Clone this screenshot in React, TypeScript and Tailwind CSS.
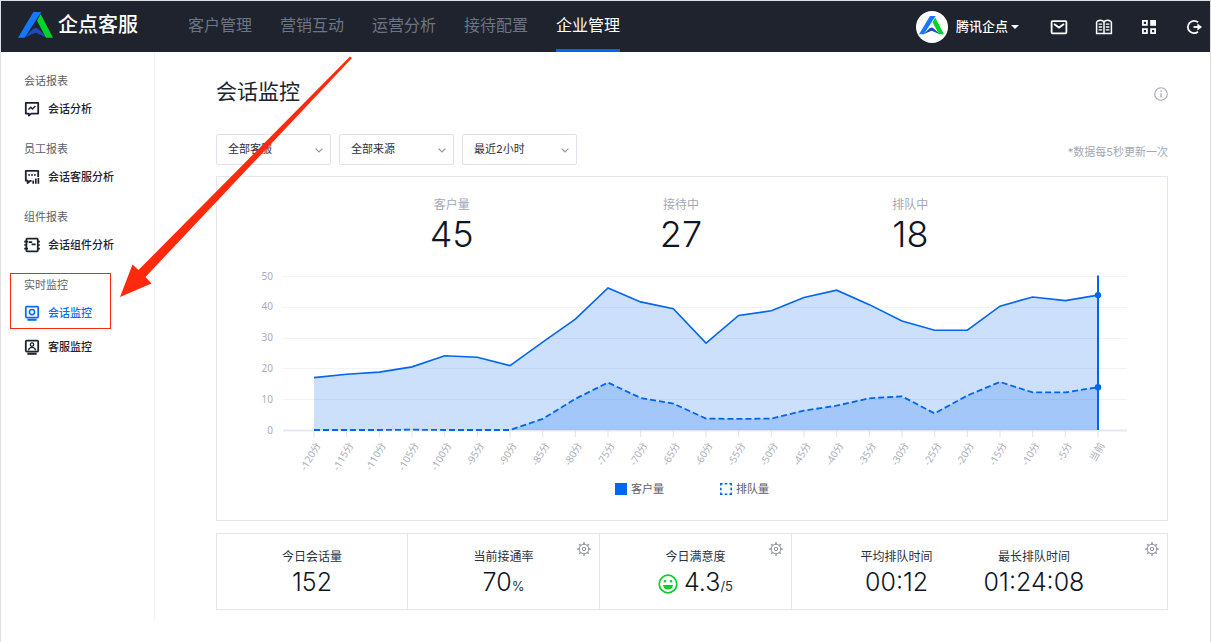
import type { ReactNode } from "react";

const CUSTOMERS = [17, 18.1, 18.8, 20.5, 24.1, 23.6, 20.9, 28.5, 36, 46.1, 41.6, 39.4, 28.2, 37.2, 38.7, 43, 45.4, 40.7, 35.4, 32.4, 32.4, 40.2, 43.2, 42, 43.8];
const QUEUED = [0, 0, 0, 0.1, 0, 0, 0, 3.6, 10.1, 15.4, 10.4, 8.6, 3.7, 3.6, 3.7, 6.3, 7.9, 10.3, 10.9, 5.4, 11.2, 15.6, 12.2, 12.2, 13.9];

const BASE = 175;
const px = (i: number) => 97 + (i * 784) / 24;
const py = (v: number) => BASE - v * 3.08;
const line = (data: number[]) => data.map((v, i) => `${px(i)},${py(v)}`).join(" ");
const area = (data: number[]) => `${px(0)},${BASE} ${line(data)} ${px(24)},${BASE}`;

function Logo({ className }: { className: string }) {
  return (
    <svg viewBox="0 0 105 77" className={className} aria-hidden="true">
      <path d="M46 0H70L20 77H0Z" fill="#1677ff" />
      <path d="M18 77L45 51Q53 45 61 51L88 77L53 62Z" fill="#1d49b8" />
      <path d="M68 6L105 77H84L57 26Z" fill="#00d42b" />
    </svg>
  );
}

function IconButton({ label, children }: { label: string; children: ReactNode }) {
  return (
    <button type="button" aria-label={label} className="flex size-[18px] items-center justify-center text-white">
      <svg viewBox="0 0 18 18" className="size-[18px]" fill="none" stroke="currentColor" strokeWidth="1.8">
        {children}
      </svg>
    </button>
  );
}

function Gear() {
  const teeth = [0, 45, 90, 135, 180, 225, 270, 315];
  return (
    <button type="button" aria-label="设置" className="absolute top-2 right-2 text-[#8d92a0]">
      <svg viewBox="0 0 14 14" className="size-[14px]" fill="none" stroke="currentColor" strokeWidth="1">
        <circle cx="7" cy="7" r="4.8" />
        <circle cx="7" cy="7" r="1.7" />
        {teeth.map((a) => (
          <path key={a} d="M7 2.2V0.3" strokeWidth="1.5" transform={`rotate(${a} 7 7)`} />
        ))}
      </svg>
    </button>
  );
}

function NavItem({ active, children }: { active?: boolean; children: ReactNode }) {
  return (
    <a
      href="#"
      aria-current={active ? "page" : undefined}
      className={
        active
          ? "flex h-full items-center border-b-[3px] border-[#0066f5] text-[16px] whitespace-nowrap text-white"
          : "flex h-full items-center border-b-[3px] border-transparent text-[16px] whitespace-nowrap text-[#6d7484]"
      }
    >
      {children}
    </a>
  );
}

function SideHeading({ children }: { children: ReactNode }) {
  return <h2 className="flex h-[22px] items-center text-[11px] text-[#5c6068]">{children}</h2>;
}

function SideItem({ icon, active, children }: { icon: ReactNode; active?: boolean; children: ReactNode }) {
  return (
    <a
      href="#"
      className={
        active
          ? "flex h-[34px] items-center gap-2 text-[11px] font-medium text-[#0a6cf5]"
          : "flex h-[34px] items-center gap-2 text-[11px] font-medium text-[#1d2331]"
      }
    >
      <svg viewBox="0 0 16 16" className="size-4" fill="none" stroke="currentColor" strokeWidth="1.8">
        {icon}
      </svg>
      {children}
    </a>
  );
}

function Filter({ label, options }: { label: string; options: string[] }) {
  return (
    <div className="relative w-[115px]">
      <select
        aria-label={label}
        className="h-[31px] w-full appearance-none rounded-[2px] border border-[#dfe2ec] bg-white pl-[11px] text-[11px] text-[#2b303c]"
      >
        {options.map((o) => (
          <option key={o}>{o}</option>
        ))}
      </select>
      <svg viewBox="0 0 8 5" className="pointer-events-none absolute top-[14px] right-2 w-2" fill="none" stroke="#8f95a3" strokeWidth="1.2">
        <path d="M0.6 0.6L4 4L7.4 0.6" />
      </svg>
    </div>
  );
}

function Headline({ label, value }: { label: string; value: string }) {
  return (
    <div className="flex flex-col items-center">
      <span className="text-[12px] leading-4 text-[#a3a8b3]">{label}</span>
      <span className="text-[36px] leading-[42px] font-light text-[#0f1524]">{value}</span>
    </div>
  );
}

function Stat({ label, children }: { label: string; children: ReactNode }) {
  return (
    <div className="flex flex-col items-center">
      <span className="text-[12px] leading-4 whitespace-nowrap text-[#2b303c]">{label}</span>
      <span className="flex items-baseline text-[25px] leading-[34px] font-light text-[#0f1524]">{children}</span>
    </div>
  );
}

function TrendChart() {
  const label = (i: number) => (i === 24 ? "当前" : `-${120 - i * 5}分`);
  return (
    <svg viewBox="0 0 950 222" className="block h-auto w-full" role="img" aria-label="客户量与排队量趋势">
      <g className="font-['Noto_Sans','Noto_Sans_CJK_SC',sans-serif]" fontSize="10" fill="#a9aeb8">
        {[50, 40, 30, 20, 10, 0].map((v) => (
          <g key={v}>
            <text x="56" y={py(v) + 3.5} textAnchor="end">
              {v}
            </text>
            <path d={`M66 ${Math.round(py(v)) + 0.5}H910`} stroke={v === 0 ? "#e6e9f3" : "#f2f3f5"} strokeWidth={v === 0 ? 2 : 1} />
          </g>
        ))}
        {CUSTOMERS.map((_, i) => (
          <g key={i}>
            <path d={`M${px(i)} ${BASE}v7`} stroke="#dfe3f0" />
            <text textAnchor="end" transform={`translate(${px(i) + 7} 190) rotate(-60)`}>
              {label(i)}
            </text>
          </g>
        ))}
      </g>
      <polygon points={area(CUSTOMERS)} fill="#0066f0" fillOpacity="0.2" />
      <polygon points={area(QUEUED)} fill="#0066f0" fillOpacity="0.2" />
      <polyline points={line(CUSTOMERS)} fill="none" stroke="#0066f0" strokeWidth="1.6" />
      <polyline points={line(QUEUED)} fill="none" stroke="#0066f0" strokeWidth="1.8" strokeDasharray="6 3" />
      <path d={`M${px(24)} 20.5V${BASE}`} stroke="#0066f0" strokeWidth="2" />
      <circle cx={px(24)} cy={py(43.8)} r="3.2" fill="#0066f0" />
      <circle cx={px(24)} cy={py(13.9)} r="3.2" fill="#0066f0" />
    </svg>
  );
}

export default function App() {
  return (
    <div className="relative min-h-screen border border-[#dcdedf] bg-white font-['Inter','Noto_Sans_CJK_SC',sans-serif]">
      <header className="flex h-[51px] items-stretch bg-[#1e232e] pr-[7px]">
        <a href="#" className="flex w-[187px] shrink-0 items-center gap-[5px] pb-[3px] pl-[17px] text-[20px] font-medium text-white">
          <Logo className="w-[35px]" />
          <span className="whitespace-nowrap">企点客服</span>
        </a>
        <nav className="flex gap-7">
          <NavItem>客户管理</NavItem>
          <NavItem>营销互动</NavItem>
          <NavItem>运营分析</NavItem>
          <NavItem>接待配置</NavItem>
          <NavItem active>企业管理</NavItem>
        </nav>
        <div className="ml-auto flex items-center gap-[27px]">
          <button type="button" className="mr-1 flex items-center gap-2 text-[13px] font-medium whitespace-nowrap text-white">
            <span className="flex size-8 items-center justify-center rounded-full bg-white pb-[2px]">
              <Logo className="w-[25px]" />
            </span>
            <span className="flex items-center gap-[3px]">
              腾讯企点
              <svg viewBox="0 0 8 4" className="w-2" fill="currentColor">
                <path d="M0 0H8L4 4Z" />
              </svg>
            </span>
          </button>
          <IconButton label="消息">
            <rect x="1.6" y="3.1" width="14.8" height="12.2" rx="1" />
            <path d="M4 6L9 9.6L14 6" />
          </IconButton>
          <IconButton label="文档">
            <path d="M9 4.2Q8 2.2 5.4 2.2T1.6 4.2V15.4H16.4V4.2Q15.2 2.2 12.6 2.2T9 4.2V15.4" strokeWidth="1.5" />
            <path d="M3.6 6.2H7.2M3.6 9H7.2M3.6 11.8H7.2M10.8 6.2H14.4M10.8 9H14.4M10.8 11.8H14.4" strokeWidth="1.3" />
          </IconButton>
          <IconButton label="应用">
            <path d="M2.9 2.9H6.9V6.9H2.9ZM2.9 11.1H6.9V15.1H2.9ZM11.1 11.1H15.1V15.1H11.1Z" />
            <path d="M10.2 2H16V7.8H10.2Z" fill="currentColor" stroke="none" />
          </IconButton>
          <IconButton label="退出">
            <path d="M13 4.2A6.2 6.2 0 1 0 13 13.8" />
            <path d="M8.5 9H14" />
            <path d="M12.4 5.4L17 9L12.4 12.6Z" fill="currentColor" stroke="none" />
          </IconButton>
        </div>
      </header>

      <div className="flex">
        <aside className="mb-[22px] w-[154px] shrink-0 border-r border-[#eef0f4] pt-[18px] pl-[23px]">
          <section className="mb-3">
            <SideHeading>会话报表</SideHeading>
            <SideItem
              icon={
                <>
                  <path d="M1.8 1.8H14.2V12.6H7.2L4.8 14.6V12.6H1.8Z" strokeLinejoin="round" />
                  <path d="M4.4 8.6L6.8 6.2L8.4 8L11.4 5" strokeWidth="1.4" />
                </>
              }
            >
              会话分析
            </SideItem>
          </section>
          <section className="mb-3">
            <SideHeading>员工报表</SideHeading>
            <SideItem
              icon={
                <>
                  <path d="M14.2 8V1.8H1.8V11.6H3.6V14L6.4 11.8H7.6" strokeLinejoin="round" />
                  <path d="M4.2 6H6M7.1 6H8.9M10 6H11.8" strokeWidth="1.6" />
                  <path d="M9.2 14.8V11.6M11.8 14.8V9.6M14.4 14.8V9" strokeWidth="1.7" />
                </>
              }
            >
              会话客服分析
            </SideItem>
          </section>
          <section className="mb-3">
            <SideHeading>组件报表</SideHeading>
            <SideItem
              icon={
                <>
                  <rect x="2.4" y="1.6" width="11.4" height="12.8" rx="0.8" />
                  <path d="M0.2 4.6H4M0.2 8H3M0.2 11.6H4M14 4.6H15.9M14 8H15.9M14 11.6H15.9" strokeWidth="1.6" />
                  <path d="M4.6 5.2H8.2M7.6 7.4H11.6" strokeWidth="1.7" />
                </>
              }
            >
              会话组件分析
            </SideItem>
          </section>
          <section className="relative">
            <SideHeading>实时监控</SideHeading>
            <SideItem
              active
              icon={
                <>
                  <rect x="1.8" y="1.6" width="12.4" height="11" rx="1" />
                  <circle cx="8" cy="7.1" r="2.6" strokeWidth="1.6" />
                  <path d="M3.4 14.8H12.6" strokeWidth="2" />
                </>
              }
            >
              会话监控
            </SideItem>
            <SideItem
              icon={
                <>
                  <rect x="1.8" y="1.6" width="12.4" height="11" rx="1" />
                  <circle cx="8" cy="5.6" r="1.7" strokeWidth="1.3" />
                  <path d="M4.4 11.4Q5 8.4 8 8.4T11.6 11.4" strokeWidth="1.4" />
                  <path d="M3.4 14.8H12.6" strokeWidth="2" />
                </>
              }
            >
              客服监控
            </SideItem>
            <div className="pointer-events-none absolute -top-px -left-[14px] h-[56px] w-[101px] border border-[#ff2a0c]" />
          </section>
        </aside>

        <main className="min-w-0 flex-1 pt-6 pr-[42px] pb-8 pl-[61px]">
          <div className="flex items-center justify-between">
            <h1 className="text-[21px] leading-8 text-[#1d2331]">会话监控</h1>
            <button type="button" aria-label="说明" className="pt-1 text-[#a3a8b3]">
              <svg viewBox="0 0 14 14" className="size-[14px]" fill="none" stroke="currentColor" strokeWidth="1.1">
                <circle cx="7" cy="7" r="6.3" />
                <path d="M7 6.2V10.4M7 3.6V5" strokeWidth="1.3" />
              </svg>
            </button>
          </div>

          <div className="mt-[26px] flex gap-2">
            <Filter label="客服" options={["全部客服"]} />
            <Filter label="来源" options={["全部来源"]} />
            <Filter label="时间范围" options={["最近2小时"]} />
            <p className="ml-auto self-center pt-1 text-[11px] leading-4 text-[#a3a8b3]">*数据每5秒更新一次</p>
          </div>

          <section className="mt-[11px] border border-[#e3e6ef] pt-5 pb-[23px]">
            <div className="grid grid-cols-3 pr-[142px] pl-[120px]">
              <Headline label="客户量" value="45" />
              <Headline label="接待中" value="27" />
              <Headline label="排队中" value="18" />
            </div>
            <TrendChart />
            <div className="mt-1 flex justify-center gap-14 text-[11px] leading-4 text-[#5c6068]">
              <span className="flex items-center gap-1">
                <span className="size-3 bg-[#0066f0]" />
                客户量
              </span>
              <span className="flex items-center gap-1">
                <svg viewBox="0 0 12 12" className="size-3" fill="none" stroke="#0066f0" strokeWidth="1.6">
                  <path d="M0.8 2.6V0.8H2.6M9.4 0.8H11.2V2.6M11.2 9.4V11.2H9.4M2.6 11.2H0.8V9.4M4.7 0.8H7.3M4.7 11.2H7.3M0.8 4.7V7.3M11.2 4.7V7.3" />
                </svg>
                排队量
              </span>
            </div>
          </section>

          <section className="mt-3 grid h-[77px] grid-cols-[191fr_192fr_192fr_375fr] divide-x divide-[#e3e6ef] border border-[#e3e6ef]">
            <div className="relative flex justify-center pt-[15px]">
              <Stat label="今日会话量">152</Stat>
            </div>
            <div className="relative flex justify-center pt-[15px]">
              <Stat label="当前接通率">
                70<span className="text-[13px] font-normal text-[#2b303c]">%</span>
              </Stat>
              <Gear />
            </div>
            <div className="relative flex justify-center pt-[15px]">
              <Stat label="今日满意度">
                <svg viewBox="0 0 20 20" className="mr-[6px] size-5 self-center" fill="none" stroke="#0bcf2b" strokeWidth="1.7">
                  <circle cx="10" cy="10" r="8.8" />
                  <path d="M5 11H15Q14.4 15.6 10 15.6T5 11Z" fill="#0bcf2b" stroke="none" />
                  <circle cx="7" cy="7.2" r="1.2" fill="#0bcf2b" stroke="none" />
                  <circle cx="13" cy="7.2" r="1.2" fill="#0bcf2b" stroke="none" />
                </svg>
                4.3<span className="text-[13px] font-normal text-[#2b303c]">/5</span>
              </Stat>
              <Gear />
            </div>
            <div className="relative flex justify-center gap-[51px] pt-[15px] pr-[14px]">
              <Stat label="平均排队时间">00:12</Stat>
              <Stat label="最长排队时间">01:24:08</Stat>
              <Gear />
            </div>
          </section>
        </main>
      </div>

      <svg viewBox="0 0 234 242" className="pointer-events-none absolute top-[55px] left-[118px] w-[234px]" fill="#ff2a0c" aria-hidden="true">
        <path d="M231 0.6L19.5 214L13.5 208.5L1 241L32.5 227.5L26.5 221L233 2Z" />
      </svg>
    </div>
  );
}
